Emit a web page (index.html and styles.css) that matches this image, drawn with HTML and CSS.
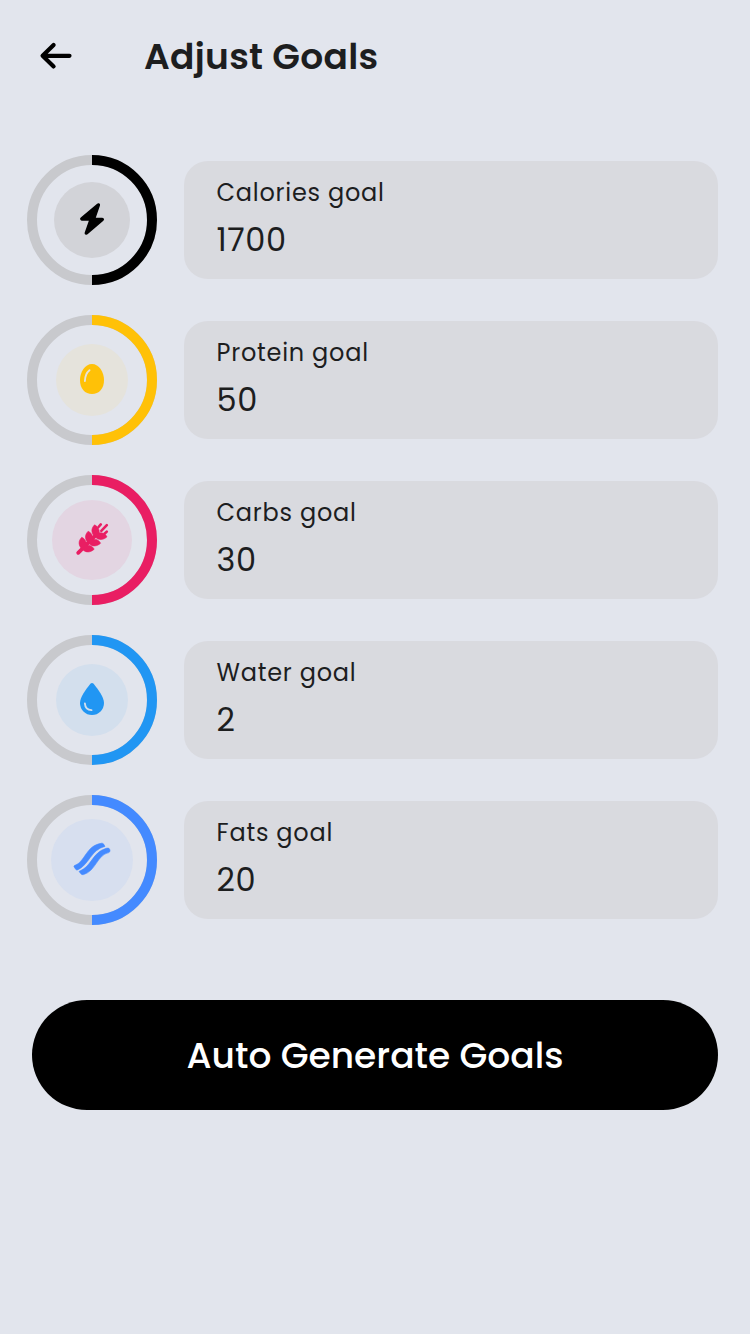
FILE: index.html
```html
<!DOCTYPE html>
<html lang="en">
<head>
<meta charset="utf-8">
<title>Adjust Goals</title>
<link rel="stylesheet" href="styles.css">
</head>
<body>
<header class="bar">
  <svg class="back" viewBox="0 0 34 30"><path d="M3.6 14.8H30.5M14.6 4 3.6 14.8 14.6 25.4"/></svg>
  <h1 class="title">Adjust Goals</h1>
</header>
<main class="goals">
  <section class="goal calories">
    <svg class="ring" viewBox="0 0 130 130">
      <circle class="track" cx="65" cy="65" r="60"/><path class="progress" d="M65 5a60 60 0 0 1 0 120"/>
      <circle class="disc" cx="65" cy="65" r="38"/>
      <path class="glyph joined" d="M71.3 50 54.9 63.9H64.4L59.4 78 75.2 64.5H66.3Z"/>
    </svg>
    <div class="field"><span class="label">Calories goal</span><span class="value">1700</span></div>
  </section>
  <section class="goal protein">
    <svg class="ring" viewBox="0 0 130 130">
      <circle class="track" cx="65" cy="65" r="60"/><path class="progress" d="M65 5a60 60 0 0 1 0 120"/>
      <circle class="disc" cx="65" cy="65" r="36"/>
      <path class="glyph" d="M65 49C58 49 53 57 53 65C53 73.800 58 79 65 79S77 73.800 77 65C77 57 72 49 65 49Z"/>
      <path class="shine" d="M57.9 66C58.1 61 59.8 57.3 62.5 55.2"/>
    </svg>
    <div class="field"><span class="label">Protein goal</span><span class="value">50</span></div>
  </section>
  <section class="goal carbs">
    <svg class="ring" viewBox="0 0 130 130">
      <circle class="track" cx="65" cy="65" r="60"/><path class="progress" d="M65 5a60 60 0 0 1 0 120"/>
      <circle class="disc" cx="65" cy="65" r="40"/>
      <path class="stem" d="M51.2 77.8 70 59"/>
      <path class="twig" d="M71.5 52 73.8 49.4M74.3 55.8 79.8 50.2M77.5 58.8 79.8 56.6"/>
      <path class="glyph round" d="M54.8 62.2C58.3 64 59.7 67 59.4 70.2C63 69.8 65.6 71.200 67.2 74.2C63.5 77.600 59 78 55.400 74.400C51.200 70.500 51 66 54.800 62.200ZM61.200 56.200C64.700 58 66.100 61 65.800 64.200C69.400 63.800 72 65.200 73.600 68.200C69.900 71.600 65.400 72 61.800 68.400C57.600 64.500 57.400 60 61.200 56.200ZM67.600 49.800C71.100 51.600 72.500 54.600 72.200 57.800C75.800 57.400 78.400 58.800 80 61.800C76.300 65.200 71.800 65.600 68.200 62C64 58.100 63.800 53.600 67.600 49.800Z"/>
    </svg>
    <div class="field"><span class="label">Carbs goal</span><span class="value">30</span></div>
  </section>
  <section class="goal water">
    <svg class="ring" viewBox="0 0 130 130">
      <circle class="track" cx="65" cy="65" r="60"/><path class="progress" d="M65 5a60 60 0 0 1 0 120"/>
      <circle class="disc" cx="65" cy="65" r="36"/>
      <path class="glyph" d="M63.400 48.800Q65 47.200 66.600 48.800C71 54.500 77 62.300 77 68A12 12 0 0 1 53 68C53 62.300 59 54.500 63.400 48.800Z"/>
      <path class="shine" d="M57.900 68.500C58.200 72.500 60.800 75 64.500 75.100"/>
    </svg>
    <div class="field"><span class="label">Water goal</span><span class="value">2</span></div>
  </section>
  <section class="goal fats">
    <svg class="ring" viewBox="0 0 130 130">
      <circle class="track" cx="65" cy="65" r="60"/><path class="progress" d="M65 5a60 60 0 0 1 0 120"/>
      <circle class="disc" cx="65" cy="65" r="41"/>
      <path class="glyph thick" d="M47.400 70.600C58.500 67 58.500 50.500 74.500 48.200Q76 48 76.800 49.300L78 51.400C64 54.500 62 70 50.500 74.900Q49.300 75.300 48.600 74.200L47 71.800Q46.800 70.900 47.400 70.600ZM79.200 53.300 81 53.100Q82 53.100 82.600 54.100L83 55.600Q83.100 57 81.800 57.600C70 60 69 76 56.500 79.600Q54.800 80 53.900 78.800L52 76.400C65 71.500 65 57.500 79.200 53.300Z"/>
    </svg>
    <div class="field"><span class="label">Fats goal</span><span class="value">20</span></div>
  </section>
</main>
<button class="generate">Auto Generate Goals</button>
</body>
</html>
```
FILE: styles.css
```css
* { box-sizing: border-box; }
body {
  margin: 0;
  height: 1334px;
  background: #e2e5ed;
  color: #1d1e1f;
  font-family: Poppins, Inter, sans-serif;
}
.bar { display: flex; align-items: center; height: 112px; padding-left: 39px; }
.back { width: 34px; height: 30px; fill: none; stroke: #000; stroke-width: 4.2; stroke-linecap: round; stroke-linejoin: round; }
.title { margin: 0 0 0 71px; font-size: 36px; font-weight: 600; letter-spacing: .3px; }
.goals { display: grid; gap: 30px; padding: 43px 32px 0 27px; }
.goal { display: flex; align-items: center; gap: 27px; height: 130px; }
.ring { width: 130px; height: 130px; flex: none; fill: none; }
.track { stroke: #c8c9cd; stroke-width: 10; }
.progress { stroke: var(--accent); stroke-width: 10; }
.disc { fill: var(--tint); }
.glyph { fill: var(--accent); }
.joined { stroke: var(--accent); stroke-width: 3.6; stroke-linejoin: round; }
.round { stroke: var(--accent); stroke-width: .6; stroke-linejoin: round; }
.thick { stroke: var(--accent); stroke-width: .6; }
.shine { stroke: var(--tint); stroke-width: 1.9; stroke-linecap: round; }
.stem { stroke: var(--accent); stroke-width: 3.8; stroke-linecap: round; }
.twig { stroke: var(--accent); stroke-width: 2.6; stroke-linecap: round; }
.calories { --accent: #000; --tint: #d2d3d8; }
.protein { --accent: #ffc107; --tint: #e5e3dc; }
.carbs { --accent: #e91e63; --tint: #e3d5e2; }
.water { --accent: #2196f3; --tint: #d3dfed; }
.fats { --accent: #448aff; --tint: #d7dfef; }
.field { flex: 1; height: 118px; padding: 16px 32.6px; border-radius: 24px; background: #d9dadf; display: flex; flex-direction: column; }
.label { font-size: 24px; line-height: 32px; letter-spacing: .75px; font-weight: 400; }
.value { font-size: 32px; line-height: 40px; margin-top: 11px; letter-spacing: .5px; font-weight: 400; }
.generate {
  display: block; width: 686px; height: 110px; margin: 75px 0 0 32px; padding: 0;
  border: 0; border-radius: 55px; background: #000; color: #fff;
  font: 500 36px Poppins, Inter, sans-serif;
}
```
